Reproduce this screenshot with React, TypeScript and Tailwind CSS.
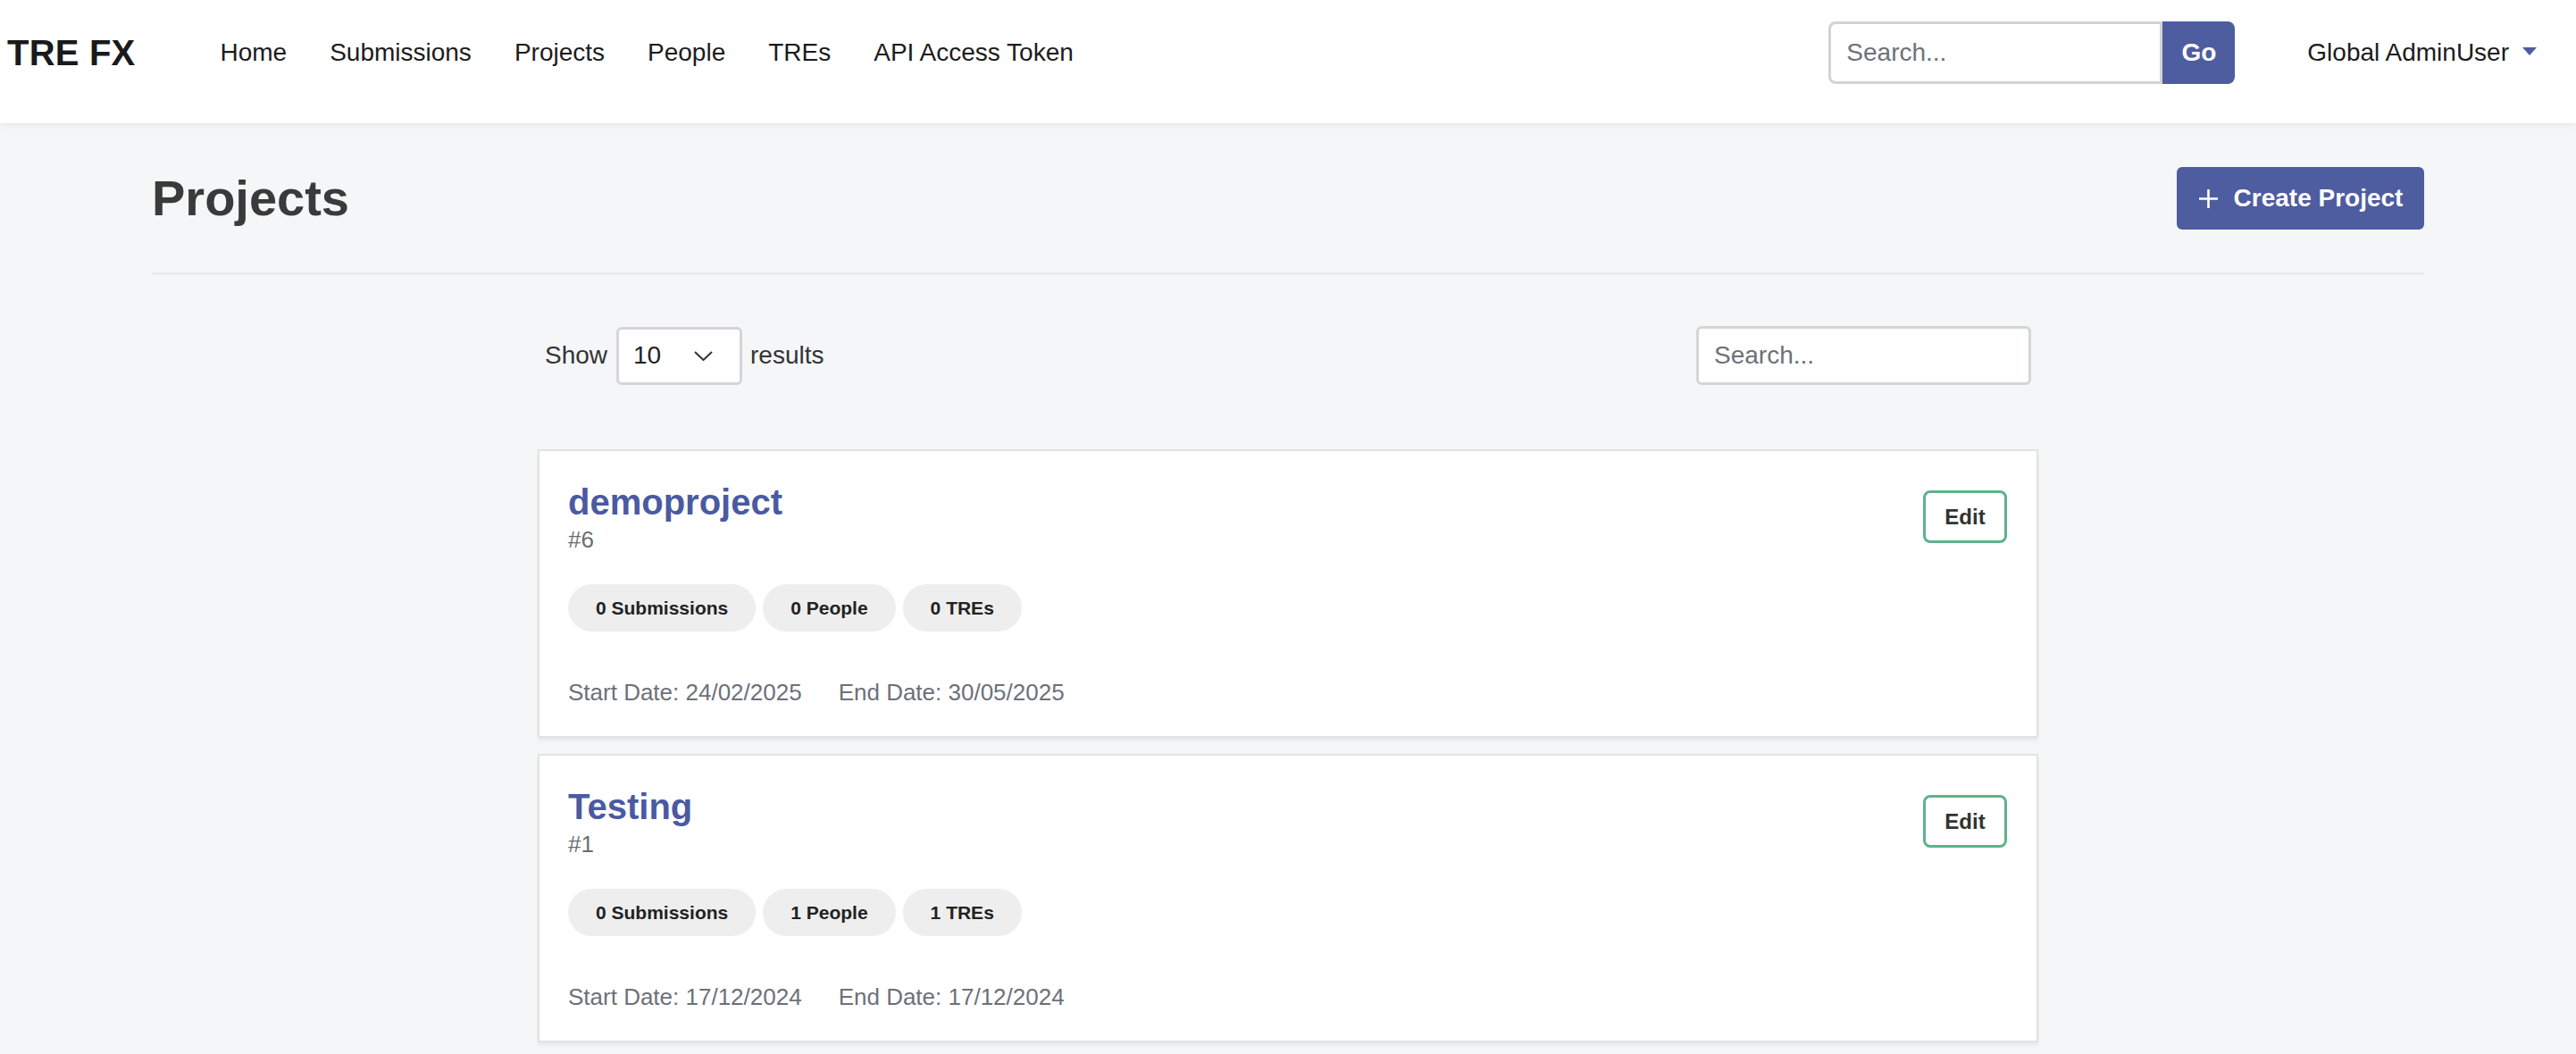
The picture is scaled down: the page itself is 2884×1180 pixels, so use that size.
import React from 'react';

const navLinks = ['Home', 'Submissions', 'Projects', 'People', 'TREs', 'API Access Token'];

const projects = [
  { id: 6, name: 'demoproject', submissions: 0, people: 0, tres: 0, start: '24/02/2025', end: '30/05/2025' },
  { id: 1, name: 'Testing', submissions: 0, people: 1, tres: 1, start: '17/12/2024', end: '17/12/2024' },
];

const Pill = ({ children }: { children: React.ReactNode }) => (
  <span className="h-[53px] px-[31px] rounded-full bg-[#eeeeee] text-[#222] text-[21px] font-bold flex items-center">
    {children}
  </span>
);

const ProjectCard = ({ p }: { p: (typeof projects)[number] }) => (
  <div className="bg-white border-2 border-[#e1e2e4] shadow-[0_3px_4px_rgba(0,0,0,0.06)] pt-[33px] pb-[31px] pl-[32px] pr-[33px]">
    <div className="flex items-start justify-between">
      <div>
        <div className="text-[40px] leading-[48px] font-bold text-[#4a5aa2]">{p.name}</div>
        <div className="text-[26px] leading-[36px] text-[#6b6e72]">#{p.id}</div>
      </div>
      <button className="mt-[11px] w-[94px] h-[59px] border-[3px] border-[#5fb28c] rounded-[8px] text-[24px] font-bold text-[#333] bg-white">
        Edit
      </button>
    </div>
    <div className="mt-[32px] flex gap-[8px]">
      <Pill>{p.submissions} Submissions</Pill>
      <Pill>{p.people} People</Pill>
      <Pill>{p.tres} TREs</Pill>
    </div>
    <div className="mt-[50px] text-[26px] leading-[36px] text-[#6c7178] flex gap-[41px]">
      <span>Start Date: {p.start}</span>
      <span>End Date: {p.end}</span>
    </div>
  </div>
);

export default function App() {
  return (
    <div className="min-h-screen bg-[#f5f6f8] font-['Liberation_Sans',Arial,sans-serif] text-[#212529]">
      <header className="h-[138px] bg-white shadow-[0_2px_6px_rgba(0,0,0,0.07)] flex items-start pt-[24px] pl-[8px] pr-[44px] relative z-10">
        <div className="h-[70px] flex items-center w-full">
          <div className="text-[40px] font-bold text-[#1a1a1a] tracking-[0.2px] mr-[95px]">TRE FX</div>
          <nav className="flex items-center gap-[48px] text-[28px] text-[#1c1c1c]">
            {navLinks.map(l => (
              <a key={l} className="cursor-pointer">{l}</a>
            ))}
          </nav>
          <div className="ml-auto flex items-center">
            <div className="flex h-[70px]">
              <input
                placeholder="Search..."
                className="w-[374px] h-[70px] border-[3px] border-[#d2d3d5] rounded-l-[8px] pl-[17px] text-[28px] placeholder:text-[#6c7178] outline-none"
              />
              <button className="w-[81px] h-[70px] bg-[#4e5ca0] text-white text-[28px] font-bold rounded-r-[8px]">Go</button>
            </div>
            <div className="ml-[81px] flex items-center text-[28px] text-[#1c1c1c]">
              Global AdminUser
              <svg width="16" height="9" viewBox="0 0 16 9" className="ml-[15px] mb-[4px]">
                <path d="M0 0 L16 0 L8 9 Z" fill="#4e5ca0" />
              </svg>
            </div>
          </div>
        </div>
      </header>

      <main className="w-[2544px] mx-auto">
        <div className="mt-[49px] flex items-center justify-between h-[70px]">
          <h1 className="text-[56px] font-bold text-[#3a3a3a] leading-none">Projects</h1>
          <button className="w-[277px] h-[70px] bg-[#4e5ca0] text-white rounded-[6px] flex items-center justify-center gap-[17px] text-[28px] font-bold">
            <svg width="23" height="23" viewBox="0 0 23 23">
              <path d="M11.5 1 V22 M1 11.5 H22" stroke="white" strokeWidth="2.6" />
            </svg>
            Create Project
          </button>
        </div>
        <div className="mt-[48px] h-[3px] bg-[#e9eaec]" />

        <div className="w-[1680px] mx-auto">
          <div className="mt-[57px] px-[8px] flex items-center justify-between">
            <div className="flex items-center text-[28px] text-[#333]">
              <span>Show</span>
              <div className="ml-[10px] mr-[9px] w-[141px] h-[65px] bg-white border-[3px] border-[#d4d5d8] rounded-[6px] flex items-center justify-between pl-[16px] pr-[30px]">
                <span className="text-[#222]">10</span>
                <svg width="21" height="11" viewBox="0 0 21 11">
                  <path d="M1 1 L10.5 10 L20 1" stroke="#333" strokeWidth="2" fill="none" />
                </svg>
              </div>
              <span>results</span>
            </div>
            <input
              placeholder="Search..."
              className="w-[375px] h-[66px] bg-white border-[3px] border-[#d4d5d8] rounded-[6px] pl-[17px] text-[28px] placeholder:text-[#6c7178] outline-none"
            />
          </div>

          <div className="mt-[72px] flex flex-col gap-[18px]">
            {projects.map(p => (
              <ProjectCard key={p.id} p={p} />
            ))}
          </div>
        </div>
      </main>
    </div>
  );
}
